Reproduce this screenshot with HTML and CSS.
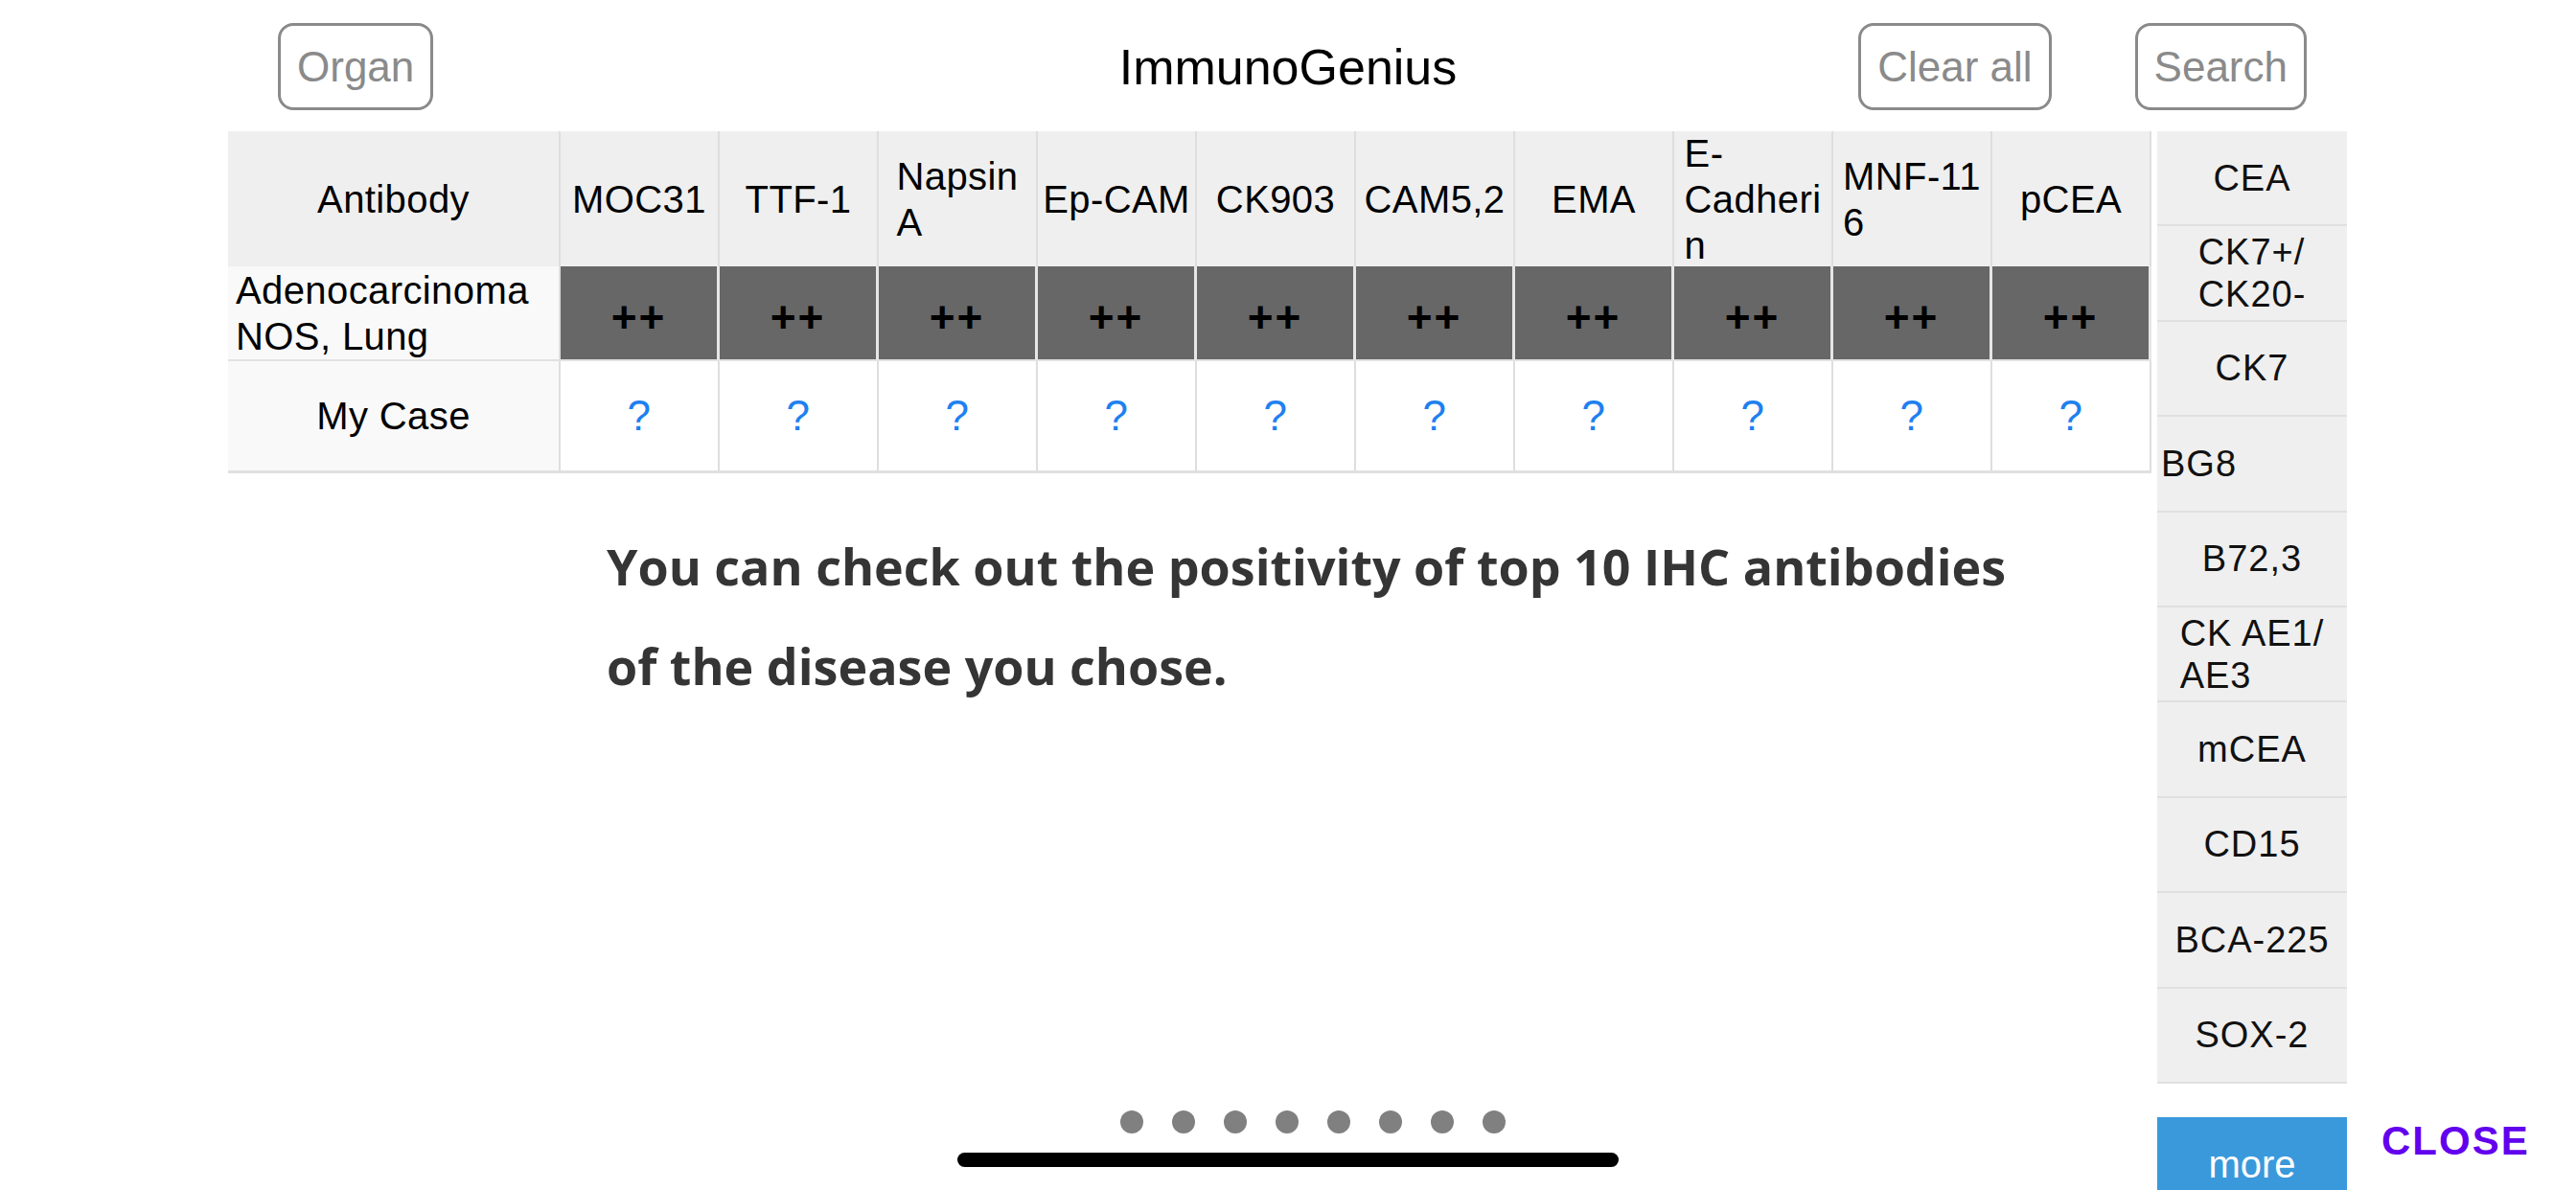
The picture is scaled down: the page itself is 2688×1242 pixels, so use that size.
FILE: index.html
```html
<!doctype html>
<html>
<head>
<meta charset="UTF-8">
<title>ImmunoGenius</title>
<link rel="stylesheet" href="styles.css">
</head>

<body>
  <div class="app">
    <header class="topbar">
      <div class="topbar-left">
        <a class="btn" href="#">Organ</a>
      </div>
      <h1 class="title">ImmunoGenius</h1>
      <div class="topbar-right">
        <a class="btn" href="#">Clear all</a>
        <a class="btn" href="#">Search</a>
      </div>
    </header>

    <div class="main">
      <div class="content">
        <div class="ihc">
          <!-- header row -->
          <div class="cell head">Antibody</div>
          <div class="cell head">MOC31</div>
          <div class="cell head">TTF-1</div>
          <div class="cell head"><span class="wrap">Napsin<br>A</span></div>
          <div class="cell head">Ep-CAM</div>
          <div class="cell head">CK903</div>
          <div class="cell head">CAM5,2</div>
          <div class="cell head">EMA</div>
          <div class="cell head"><span class="wrap">E-<br>Cadheri<br>n</span></div>
          <div class="cell head"><span class="wrap">MNF-11<br>6</span></div>
          <div class="cell head">pCEA</div>
          <!-- disease row -->
          <div class="cell name disease">Adenocarcinoma<br>NOS, Lung</div>
          <div class="cell score">++</div>
          <div class="cell score">++</div>
          <div class="cell score">++</div>
          <div class="cell score">++</div>
          <div class="cell score">++</div>
          <div class="cell score">++</div>
          <div class="cell score">++</div>
          <div class="cell score">++</div>
          <div class="cell score">++</div>
          <div class="cell score">++</div>
          <!-- my case row -->
          <div class="cell name case">My Case</div>
          <div class="cell ask">?</div>
          <div class="cell ask">?</div>
          <div class="cell ask">?</div>
          <div class="cell ask">?</div>
          <div class="cell ask">?</div>
          <div class="cell ask">?</div>
          <div class="cell ask">?</div>
          <div class="cell ask">?</div>
          <div class="cell ask">?</div>
          <div class="cell ask">?</div>
        </div>

        <p class="tip">You can check out the positivity of top 10 IHC antibodies<br>of the disease you chose.</p>
      </div>

      <aside class="side">
        <ul class="ab-list">
          <li>CEA</li>
          <li><span class="wrap">CK7+/<br>CK20-</span></li>
          <li>CK7</li>
          <li class="left">BG8</li>
          <li>B72,3</li>
          <li><span class="wrap">CK AE1/<br>AE3</span></li>
          <li>mCEA</li>
          <li>CD15</li>
          <li>BCA-225</li>
          <li>SOX-2</li>
        </ul>
        <div class="more-row">
          <a class="more" href="#">more</a>
          <a class="close" href="#">CLOSE</a>
        </div>
      </aside>
    </div>
  </div>

  <!-- page control + home indicator sit over the page -->
  <div class="pager">
    <span></span><span></span><span></span><span></span>
    <span></span><span></span><span></span><span></span>
  </div>
  <div class="home-bar"></div>
</body>
</html>
```

FILE: styles.css
```css
html, body {
  margin: 0;
  padding: 0;
}
body {
  width: 2688px;
  height: 1242px;
  overflow: hidden;
  position: relative;
  background-color: #fff;
  font-family: "Liberation Sans", Arial, sans-serif;
  color: #000;
}
a {
  text-decoration: none;
}
ul, li {
  list-style: none;
  margin: 0;
  padding: 0;
}

/* top bar */
.topbar {
  display: grid;
  grid-template-columns: 1fr auto 1fr;
  align-items: start;
  height: 137px;
  box-sizing: border-box;
  padding-top: 24px;
}
.topbar-left {
  padding-left: 290px;
}
.topbar-right {
  display: flex;
  justify-content: flex-end;
  gap: 87px;
  padding-right: 281px;
}
.title {
  margin: 0;
  font-size: 52px;
  font-weight: normal;
  line-height: 93px;
}
.btn {
  display: inline-flex;
  align-items: center;
  height: 91px;
  box-sizing: border-box;
  padding: 0 17px;
  border: 3px solid #8a8a8a;
  border-radius: 16px;
  color: #8a8a8a;
  font-size: 44px;
}

/* main area */
.main {
  display: flex;
  align-items: flex-start;
  gap: 6px;
  padding-left: 238px;
}
.content {
  width: 2007px;
}

/* antibody table */
.ihc {
  display: grid;
  grid-template-columns: 347px repeat(10, 166px);
  grid-template-rows: 141px 99px 117px;
  font-size: 40px;
  line-height: 48px;
  letter-spacing: 0.4px;
}
.cell {
  display: flex;
  align-items: center;
  justify-content: center;
  text-align: center;
  box-sizing: border-box;
  border-right: 2px solid #dedede;
}
.cell .wrap {
  text-align: left;
}
.head {
  background-color: #efefef;
}
.name {
  background-color: #f9f9f9;
}
.disease {
  justify-content: flex-start;
  text-align: left;
  padding-left: 8px;
  border-bottom: 2px solid #e2e2e2;
}
.case {
  border-bottom: 3px solid #e0e0e0;
}
.score {
  background-color: #676767;
  border-right: 3px solid #e6e6e6;
  border-bottom: 2px solid #e2e2e2;
  font-size: 46px;
  font-weight: bold;
  letter-spacing: 2px;
  padding-top: 8px;
}
.ask {
  background-color: #fff;
  border-bottom: 3px solid #e0e0e0;
  color: #1e80f0;
  font-size: 44px;
}

/* tutorial text */
.tip {
  margin: 0;
  padding: 45px 0 0 395px;
  font-family: "Open Sans", sans-serif;
  font-weight: 700;
  font-size: 52px;
  line-height: 104px;
  color: #353535;
  white-space: nowrap;
}

/* right list */
.side {
  width: 198px;
}
.ab-list li {
  display: flex;
  align-items: center;
  justify-content: center;
  height: 99.4px;
  box-sizing: border-box;
  border-bottom: 2px solid #e0e0e0;
  background-color: #efefef;
  font-size: 38px;
  line-height: 44px;
  letter-spacing: 1px;
  color: #111;
}
.ab-list li.left {
  justify-content: flex-start;
  padding-left: 4px;
}
.ab-list .wrap {
  text-align: left;
}
.more-row {
  display: flex;
  align-items: flex-start;
  gap: 36px;
  margin-top: 35px;
}
.more {
  display: flex;
  align-items: center;
  justify-content: center;
  flex: none;
  width: 198px;
  height: 100px;
  background-color: #3a99db;
  color: #fff;
  font-size: 40px;
}
.close {
  margin-top: 4px;
  font-weight: bold;
  font-size: 42px;
  line-height: 42px;
  letter-spacing: 2px;
  color: #6200ee;
}

/* overlays */
.pager {
  position: absolute;
  left: 1169px;
  top: 1159px;
  display: flex;
  gap: 30px;
}
.pager span {
  width: 24px;
  height: 24px;
  border-radius: 50%;
  background-color: #808080;
}
.home-bar {
  position: absolute;
  left: 999px;
  top: 1203px;
  width: 690px;
  height: 15px;
  border-radius: 8px;
  background-color: #000;
}
```
